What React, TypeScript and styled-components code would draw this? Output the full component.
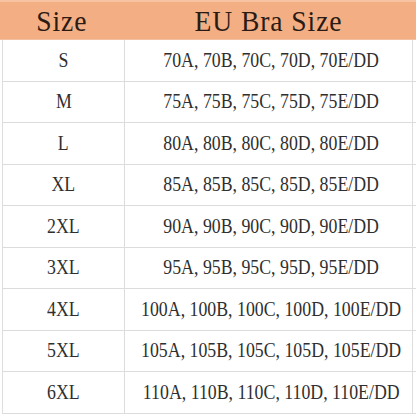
import * as React from 'react'
import styled, { createGlobalStyle } from 'styled-components'

const rows: [string, string][] = [
  ['S', '70A, 70B, 70C, 70D, 70E/DD'],
  ['M', '75A, 75B, 75C, 75D, 75E/DD'],
  ['L', '80A, 80B, 80C, 80D, 80E/DD'],
  ['XL', '85A, 85B, 85C, 85D, 85E/DD'],
  ['2XL', '90A, 90B, 90C, 90D, 90E/DD'],
  ['3XL', '95A, 95B, 95C, 95D, 95E/DD'],
  ['4XL', '100A, 100B, 100C, 100D, 100E/DD'],
  ['5XL', '105A, 105B, 105C, 105D, 105E/DD'],
  ['6XL', '110A, 110B, 110C, 110D, 110E/DD'],
]

const App: React.FC = () => (
  <>
    <GlobalStyle />
    <Chart>
      <HeaderRow>
        <HeaderCell>
          <HeaderText>Size</HeaderText>
        </HeaderCell>
        <HeaderCell>
          <HeaderText>EU Bra Size</HeaderText>
        </HeaderCell>
      </HeaderRow>
      <Body>
        {rows.map(([size, bra]) => (
          <React.Fragment key={size}>
            <Cell first>
              <Narrow>{size}</Narrow>
            </Cell>
            <Cell>
              <Narrow>{bra}</Narrow>
            </Cell>
          </React.Fragment>
        ))}
      </Body>
    </Chart>
  </>
)
export default App

const GlobalStyle = createGlobalStyle`
  html, body {
    margin: 0;
    padding: 0;
    background: #ffffff;
  }
`
const Chart = styled.div`
  width: 416px;
  height: 416px;
  background: #ffffff;
  font-family: "Liberation Serif", "Times New Roman", serif;
  overflow: hidden;
`
const HeaderRow = styled.div`
  display: grid;
  grid-template-columns: 124px 1fr;
  height: 37px;
  padding-right: 3px;
  background: #f4ae84;
  border-top: 2px solid #f7c3a2;
  border-bottom: 1px solid #f2bfa0;
`
const HeaderCell = styled.div`
  display: flex;
  align-items: center;
  justify-content: center;
  padding-top: 1px;
`
const HeaderText = styled.span`
  display: inline-block;
  white-space: nowrap;
  font-family: "Liberation Serif", "Times New Roman", serif;
  font-size: 30px;
  letter-spacing: 1px;
  color: #2a1c14;
  transform: scaleX(0.92);
`
const Body = styled.div`
  display: grid;
  grid-template-columns: 122px 1fr;
  grid-auto-rows: 41.5px;
  margin: 0 3px 0 2px;
  border-left: 1px solid #dedede;
  border-right: 1px solid #dedede;
`
const Cell = styled.div<{ first?: boolean }>`
  display: flex;
  align-items: center;
  justify-content: center;
  border-bottom: 1px solid #dcdcdc;
  border-right: ${props => (props.first ? '1px solid #dcdcdc' : 'none')};
  font-size: 20px;
  color: #2f2f2f;
`
const Narrow = styled.span`
  display: inline-block;
  white-space: nowrap;
  transform: scaleX(0.89);
`
